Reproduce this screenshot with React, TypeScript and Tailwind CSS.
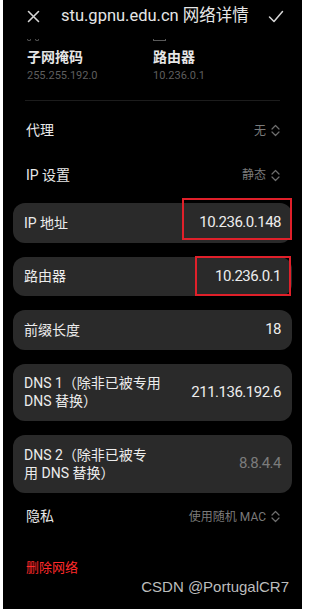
import React from "react";

const font = { fontFamily: '"Roboto", "Noto Sans CJK SC", sans-serif' };

const UpDown = () => (
  <svg width="9" height="13" viewBox="0 0 9 13" fill="none" stroke="#6e6e6e" strokeWidth="1.2" strokeLinecap="round" strokeLinejoin="round">
    <path d="M1 5 L4.5 1.5 L8 5" />
    <path d="M1 8 L4.5 11.5 L8 8" />
  </svg>
);

const SelectRow = ({ label, value, h }: { label: string; value: string; h: string }) => (
  <div className={`flex items-center justify-between pl-[23px] pr-[22px] ${h}`}>
    <span className="text-[14px] text-[#e8e8e8]">{label}</span>
    <span className="flex items-center gap-[5px] text-[12px] text-[#7a7a7a]">
      {value}
      <UpDown />
    </span>
  </div>
);

const Card = ({
  label,
  value,
  h,
  dim,
  boxed,
}: {
  label: React.ReactNode;
  value: string;
  h: string;
  dim?: boolean;
  boxed?: string;
}) => (
  <div className={`relative mx-[10px] flex items-center justify-between rounded-[12px] bg-[#2a2a2a] pl-[11px] pr-[11px] ${h}`}>
    <span className="text-[14px] leading-[18px] text-[#ececec]">{label}</span>
    <span className={`text-[15px] tracking-[-0.5px] ${dim ? "text-[#7c7c7c]" : "text-[#ededed]"}`}>{value}</span>
    {boxed && <div className={`absolute border-2 border-[#e0202a] ${boxed}`} />}
  </div>
);

export default function App() {
  return (
    <div className="flex h-[609px] w-[309px] bg-white" style={font}>
      <div className="ml-[3px] flex h-full w-[299px] flex-col overflow-hidden bg-black">
        {/* header */}
        <div className="flex h-[32px] shrink-0 items-center pl-[24px] pr-[18px]">
          <svg width="13" height="13" viewBox="0 0 13 13" stroke="#d6d6d6" strokeWidth="1.6" strokeLinecap="round">
            <path d="M1.5 1.5 L11.5 11.5 M11.5 1.5 L1.5 11.5" />
          </svg>
          <span className="ml-[21px] text-[16.5px] text-[#e6e6e6]">stu.gpnu.edu.cn 网络详情</span>
          <svg className="ml-auto" width="16" height="13" viewBox="0 0 16 13" fill="none" stroke="#d6d6d6" strokeWidth="1.5" strokeLinecap="round" strokeLinejoin="round">
            <path d="M1.5 7 L6 11.5 L14.5 1.5" />
          </svg>
        </div>
        {/* cut-off icons */}
        <div className="flex h-[10px] items-end pb-[1px]">
          <div className="ml-[24px] flex gap-[4px]">
            <div className="h-[2px] w-[4px] rounded-b-full border-b border-l border-r border-[#5a5a5a]" />
            <div className="h-[2px] w-[4px] rounded-b-full border-b border-l border-r border-[#5a5a5a]" />
          </div>
          <div className="ml-[114px] h-[2px] w-[13px] border-b border-l border-r border-[#5a5a5a]" />
        </div>
        {/* two columns */}
        <div className="flex pt-[6px] pl-[24px]">
          <div className="w-[126px]">
            <div className="text-[14px] font-bold leading-[18px] text-[#e6e6e6]">子网掩码</div>
            <div className="mt-[2px] text-[11px] text-[#5e5e5e]">255.255.192.0</div>
          </div>
          <div>
            <div className="text-[14px] font-bold leading-[18px] text-[#e6e6e6]">路由器</div>
            <div className="mt-[2px] text-[11px] text-[#5e5e5e]">10.236.0.1</div>
          </div>
        </div>
        <div className="mx-[22px] mt-[15px] h-px bg-[#1c1c1c]" />
        <SelectRow label="代理" value="无" h="mt-[8px] h-[44px]" />
        <SelectRow label="IP 设置" value="静态" h="h-[45px]" />
        <div className="mt-[5px] flex flex-col gap-[14px]">
          <Card label="IP 地址" value="10.236.0.148" h="h-[40px]" boxed="left-[169px] -top-[5px] h-[42px] w-[110px]" />
          <Card label="路由器" value="10.236.0.1" h="h-[39px]" boxed="left-[182px] -top-[1px] h-[40px] w-[96px]" />
          <Card label="前缀长度" value="18" h="h-[40px]" />
          <Card
            label={
              <>
                DNS 1（除非已被专用
                <br />
                DNS 替换）
              </>
            }
            value="211.136.192.6"
            h="h-[57px]"
          />
          <Card
            label={
              <>
                DNS 2（除非已被专
                <br />
                用 DNS 替换）
              </>
            }
            value="8.8.4.4"
            h="h-[58px]"
            dim
          />
        </div>
        <SelectRow label="隐私" value="使用随机 MAC" h="mt-[5px] h-[38px]" />
        <div className="relative mt-[19px] pl-[23px]">
          <span className="text-[13px] text-[#ff2a2a]">删除网络</span>
          <span
            className="absolute right-[13px] top-[21px] text-[15px] text-[#bdbdbd]"
            style={{ fontFamily: '"Liberation Sans", Arial, sans-serif' }}
          >
            CSDN @PortugalCR7
          </span>
        </div>
      </div>
    </div>
  );
}
